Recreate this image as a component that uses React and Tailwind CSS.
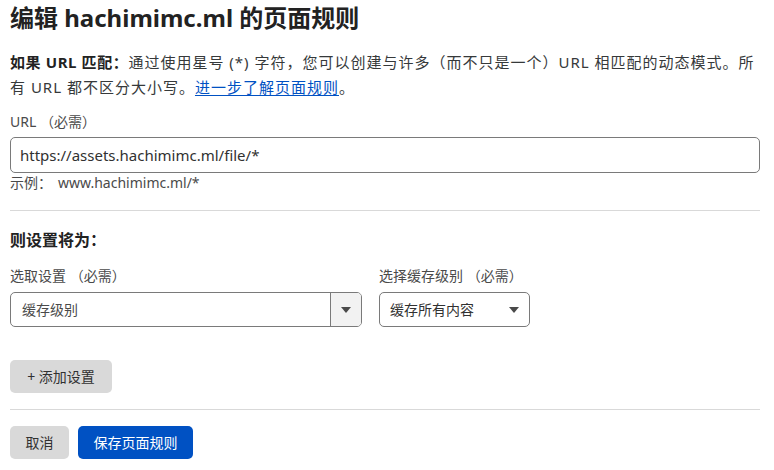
import { useState } from 'react'

const font = { fontFamily: '"Noto Sans", "Noto Sans CJK SC", sans-serif' }

function Caret() {
  return (
    <svg width="10" height="6" viewBox="0 0 10 6" className="fill-[#4a4a4a]">
      <path d="M0 0h10L5 6z" />
    </svg>
  )
}

export default function App() {
  const [url, setUrl] = useState('https://assets.hachimimc.ml/file/*')

  return (
    <div className="w-[774px] h-[470px] bg-white text-[#313131] px-[10px]" style={font}>
      <div className="w-[750px]">
        <h1 className="mt-[2px] text-[24px] leading-[32px] font-bold text-[#222]">
          编辑 hachimimc.ml 的页面规则
        </h1>

        <p className="mt-[16px] text-[15px] leading-[25px] tracking-[1px] text-[#36393a]">
          <span className="font-bold text-[#222] tracking-[0.6px]">如果 URL 匹配：</span>
          通过使用星号 (*) 字符，您可以创建与许多（而不只是一个）URL 相匹配的动态模式。所有 URL 都不区分大小写。
          <a href="#" className="text-[#0051c3] underline underline-offset-2">进一步了解页面规则</a>。
        </p>

        <label className="block mt-[12px] text-[14px] leading-[20px] text-[#4a4a4a]">URL （必需）</label>
        <input
          value={url}
          onChange={(e) => setUrl(e.target.value)}
          className="mt-[5px] block w-full h-[36px] px-[9px] border border-[#7a7a7a] rounded-[5px] text-[15px] text-[#313131] outline-none"
        />
        <div className="text-[14px] leading-[20px] text-[#4a4a4a]">
          示例：<span className="ml-[6px]">www.hachimimc.ml/*</span>
        </div>

        <div className="mt-[17px] h-px bg-[#d9d9d9]" />

        <h2 className="mt-[17px] text-[16px] leading-[24px] font-bold text-[#222]">则设置将为：</h2>

        <div className="mt-[14px] flex gap-[17px]">
          <div className="w-[352px]">
            <div className="text-[14px] leading-[20px] text-[#4a4a4a]">选取设置 （必需）</div>
            <div className="mt-[6px] flex h-[35px] border border-[#7a7a7a] rounded-[5px] overflow-hidden">
              <div className="flex-1 flex items-center pl-[11px] text-[14px] text-[#4a4a4a]">缓存级别</div>
              <div className="w-[31px] flex items-center justify-center bg-[#f2f2f2] border-l border-[#7a7a7a]">
                <Caret />
              </div>
            </div>
          </div>
          <div className="w-[151px]">
            <div className="text-[14px] leading-[20px] text-[#4a4a4a] whitespace-nowrap">选择缓存级别 （必需）</div>
            <div className="mt-[6px] flex items-center justify-between h-[35px] pl-[10px] pr-[10px] border border-[#7a7a7a] rounded-[5px] text-[14px] text-[#313131]">
              <span>缓存所有内容</span>
              <Caret />
            </div>
          </div>
        </div>

        <button className="mt-[33px] block w-[102px] h-[33px] rounded-[5px] bg-[#d9d9d9] text-[14px] text-[#313131]">
          + 添加设置
        </button>

        <div className="mt-[16px] h-px bg-[#d9d9d9]" />

        <div className="mt-[16px] flex gap-[9px]">
          <button className="w-[59px] h-[33px] rounded-[5px] bg-[#d9d9d9] text-[14px] text-[#313131]">取消</button>
          <button className="w-[115px] h-[33px] rounded-[5px] bg-[#0051c3] text-[14px] text-white">保存页面规则</button>
        </div>
      </div>
    </div>
  )
}
